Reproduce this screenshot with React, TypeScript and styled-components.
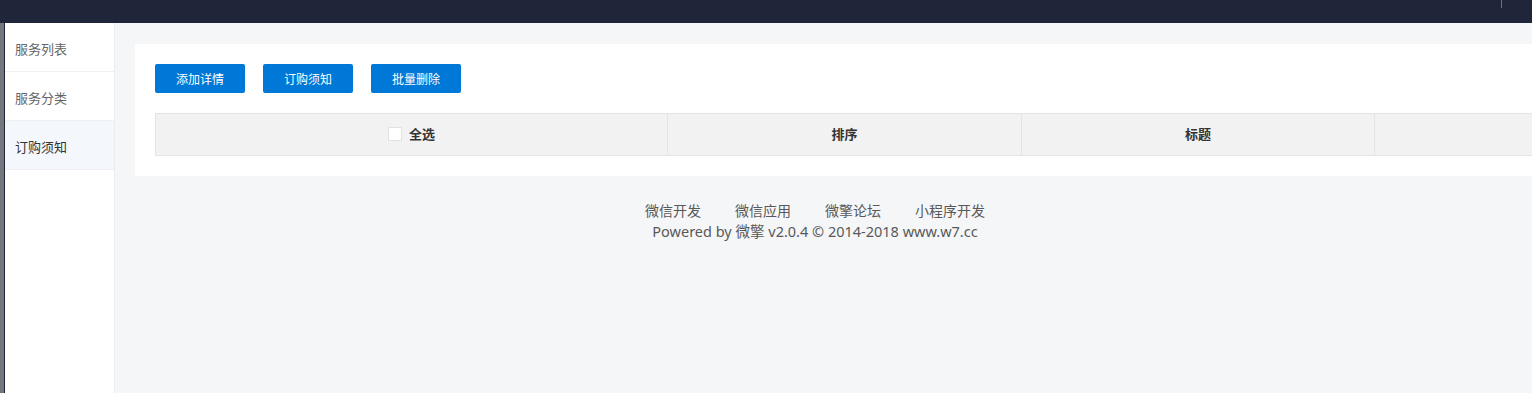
import styled, { createGlobalStyle } from 'styled-components';

const GlobalStyle = createGlobalStyle`
  html, body {
    margin: 0;
    padding: 0;
    height: 100%;
    overflow: hidden;
    font-family: "Noto Sans", "Noto Sans CJK SC", sans-serif;
  }
  #root {
    height: 100%;
  }
`;

const Page = styled.div`
  display: flex;
  flex-direction: column;
  height: 393px;
  width: 1532px;
  overflow: hidden;
`;

const TopBar = styled.div`
  height: 23px;
  flex-shrink: 0;
  background: #20263a;
  position: relative;
`;

const TopDivider = styled.span`
  position: absolute;
  left: 1501px;
  top: 0;
  width: 1px;
  height: 8px;
  background: #6c7080;
`;

const Body = styled.div`
  flex: 1;
  display: flex;
  min-height: 0;
`;

const EdgeStrip = styled.div`
  width: 4px;
  background: #75777d;
  border-right: 1px solid #20263a;
  flex-shrink: 0;
`;

const Sidebar = styled.ul`
  width: 109px;
  flex-shrink: 0;
  margin: 0;
  padding: 0;
  list-style: none;
  background: #fff;
  border-right: 1px solid #ececec;
`;

const NavItem = styled.li<{ $active?: boolean }>`
  height: 49px;
  box-sizing: border-box;
  padding: 4px 0 0 10px;
  line-height: 44px;
  font-size: 13px;
  color: ${(p) => (p.$active ? '#333' : '#666')};
  background: ${(p) => (p.$active ? '#f4f7fc' : '#fff')};
  border-bottom: 1px solid #eef0f3;
`;

const Main = styled.div`
  flex: 1;
  min-width: 0;
  background: #f5f6f8;
  padding: 21px 0 0 20px;
  overflow: hidden;
`;

const Card = styled.div`
  width: 1500px;
  background: #fff;
  padding: 20px;
`;

const Toolbar = styled.div`
  display: flex;
  gap: 18px;
  margin-bottom: 20px;
`;

const Button = styled.button`
  width: 90px;
  height: 29px;
  border: none;
  border-radius: 2px;
  background: #0078d7;
  color: #fff;
  font-size: 12px;
  font-family: inherit;
  padding: 0;
`;

const Table = styled.div`
  display: grid;
  grid-template-columns: 512px 354px 353px 1fr;
  background: #f2f2f2;
  border: 1px solid #e4e4e4;
`;

const HeadCell = styled.div<{ $last?: boolean }>`
  height: 41px;
  display: flex;
  align-items: center;
  justify-content: center;
  gap: 7px;
  font-size: 13px;
  font-weight: bold;
  color: #333;
  border-right: ${(p) => (p.$last ? 'none' : '1px solid #e4e4e4')};
  padding-bottom: 2px;
  box-sizing: border-box;
`;

const CheckBox = styled.span`
  width: 12px;
  height: 12px;
  background: #fff;
  border: 1px solid #e2e2e2;
  display: inline-block;
`;

const Footer = styled.div`
  padding: 25px 37px 0 0;
  text-align: center;
  font-size: 14.5px;
  line-height: 20px;
  color: #595959;
`;

const Links = styled.div`
  display: flex;
  justify-content: center;
  gap: 34px;
  font-size: 14px;
`;

const FooterLink = styled.a`
  color: #595959;
  text-decoration: none;
`;

const navItems = ['服务列表', '服务分类', '订购须知'];
const links = ['微信开发', '微信应用', '微擎论坛', '小程序开发'];

export default function App() {
  return (
    <Page>
      <GlobalStyle />
      <TopBar>
        <TopDivider />
      </TopBar>
      <Body>
        <EdgeStrip />
        <Sidebar>
          {navItems.map((n, i) => (
            <NavItem key={n} $active={i === 2}>{n}</NavItem>
          ))}
        </Sidebar>
        <Main>
          <Card>
            <Toolbar>
              <Button>添加详情</Button>
              <Button>订购须知</Button>
              <Button>批量删除</Button>
            </Toolbar>
            <Table>
              <HeadCell>
                <CheckBox />
                全选
              </HeadCell>
              <HeadCell>排序</HeadCell>
              <HeadCell>标题</HeadCell>
              <HeadCell $last />
            </Table>
          </Card>
          <Footer>
            <Links>
              {links.map((l) => (
                <FooterLink key={l} href="#">{l}</FooterLink>
              ))}
            </Links>
            <div>Powered by 微擎 v2.0.4 © 2014-2018 www.w7.cc</div>
          </Footer>
        </Main>
      </Body>
    </Page>
  );
}
